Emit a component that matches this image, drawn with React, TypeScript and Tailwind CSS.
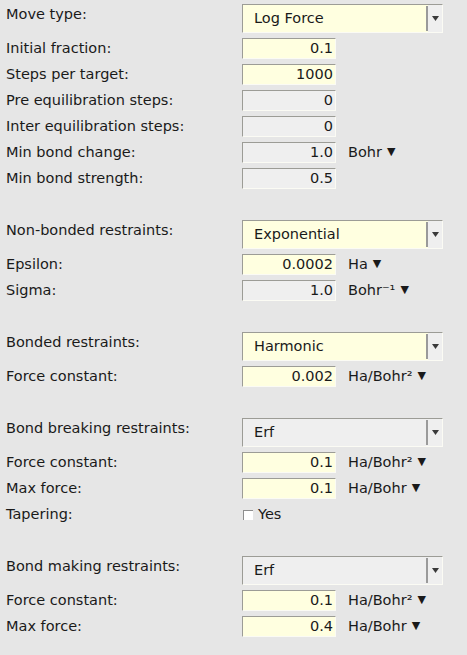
import React from 'react';

type Field = { label: string; value: string; yellow?: boolean; unit?: string };

function Combo({ label, value, yellow }: { label: string; value: string; yellow?: boolean }) {
  return (
    <div className="flex items-start mb-[5px]">
      <div className="w-[236px] h-[21px] flex items-center">{label}</div>
      <div
        className={
          'w-[201px] h-[29px] flex border-t border-l border-t-[#9c9c96] border-l-[#9c9c96] border-b border-r border-b-[#fbfbf4] border-r-[#fbfbf4] ' +
          (yellow ? 'bg-[#ffffe0]' : 'bg-[#efefef]')
        }
      >
        <div className="flex-1 flex items-center pl-[11px]">{value}</div>
        <div className="w-[2px] bg-[#9a9a9a] my-[1px]" />
        <div className="w-[14px] bg-[#efefef] flex items-center justify-center">
          <svg width="7" height="5" viewBox="0 0 7 5">
            <path d="M0 0h7L3.5 5z" fill="#3a3a3a" />
          </svg>
        </div>
      </div>
    </div>
  );
}

function FieldRow({ label, value, yellow, unit }: Field) {
  return (
    <div className="flex items-center h-[21px] mb-[5px]">
      <div className="w-[236px]">{label}</div>
      <div
        className={
          'w-[94px] h-[21px] flex items-center justify-end pr-[2px] border-t border-l border-t-[#9c9c96] border-l-[#9c9c96] border-b border-r border-b-[#fbfbf4] border-r-[#fbfbf4] ' +
          (yellow ? 'bg-[#ffffe0]' : 'bg-[#efefef]')
        }
      >
        {value}
      </div>
      {unit && (
        <div className="ml-[12px] flex items-center">
          {unit}
          <span className="ml-[5px] text-[11px]">▼</span>
        </div>
      )}
    </div>
  );
}

const Spacer = () => <div className="h-[26px]" />;

export default function App() {
  return (
    <div
      className="min-h-screen bg-[#e6e6e6] pt-[4px] pl-[6px] text-[14.5px] text-[#1a1a1a]"
      style={{ fontFamily: '"DejaVu Sans", sans-serif' }}
    >
      <Combo label="Move type:" value="Log Force" yellow />
      <FieldRow label="Initial fraction:" value="0.1" yellow />
      <FieldRow label="Steps per target:" value="1000" yellow />
      <FieldRow label="Pre equilibration steps:" value="0" />
      <FieldRow label="Inter equilibration steps:" value="0" />
      <FieldRow label="Min bond change:" value="1.0" unit="Bohr" />
      <FieldRow label="Min bond strength:" value="0.5" />
      <Spacer />

      <Combo label="Non-bonded restraints:" value="Exponential" yellow />
      <FieldRow label="Epsilon:" value="0.0002" yellow unit="Ha" />
      <FieldRow label="Sigma:" value="1.0" unit="Bohr⁻¹" />
      <Spacer />

      <Combo label="Bonded restraints:" value="Harmonic" yellow />
      <FieldRow label="Force constant:" value="0.002" yellow unit="Ha/Bohr²" />
      <Spacer />

      <Combo label="Bond breaking restraints:" value="Erf" />
      <FieldRow label="Force constant:" value="0.1" yellow unit="Ha/Bohr²" />
      <FieldRow label="Max force:" value="0.1" yellow unit="Ha/Bohr" />
      <div className="flex items-center h-[21px] mb-[5px]">
        <div className="w-[236px]">Tapering:</div>
        <div className="flex items-center">
          <div className="w-[10px] h-[10px] ml-[1px] bg-white border-t border-l border-[#8e8e8e] border-b-[#d8d8d8] border-r-[#d8d8d8]" />
          <span className="ml-[5px]">Yes</span>
        </div>
      </div>
      <Spacer />

      <Combo label="Bond making restraints:" value="Erf" />
      <FieldRow label="Force constant:" value="0.1" yellow unit="Ha/Bohr²" />
      <FieldRow label="Max force:" value="0.4" yellow unit="Ha/Bohr" />
    </div>
  );
}
